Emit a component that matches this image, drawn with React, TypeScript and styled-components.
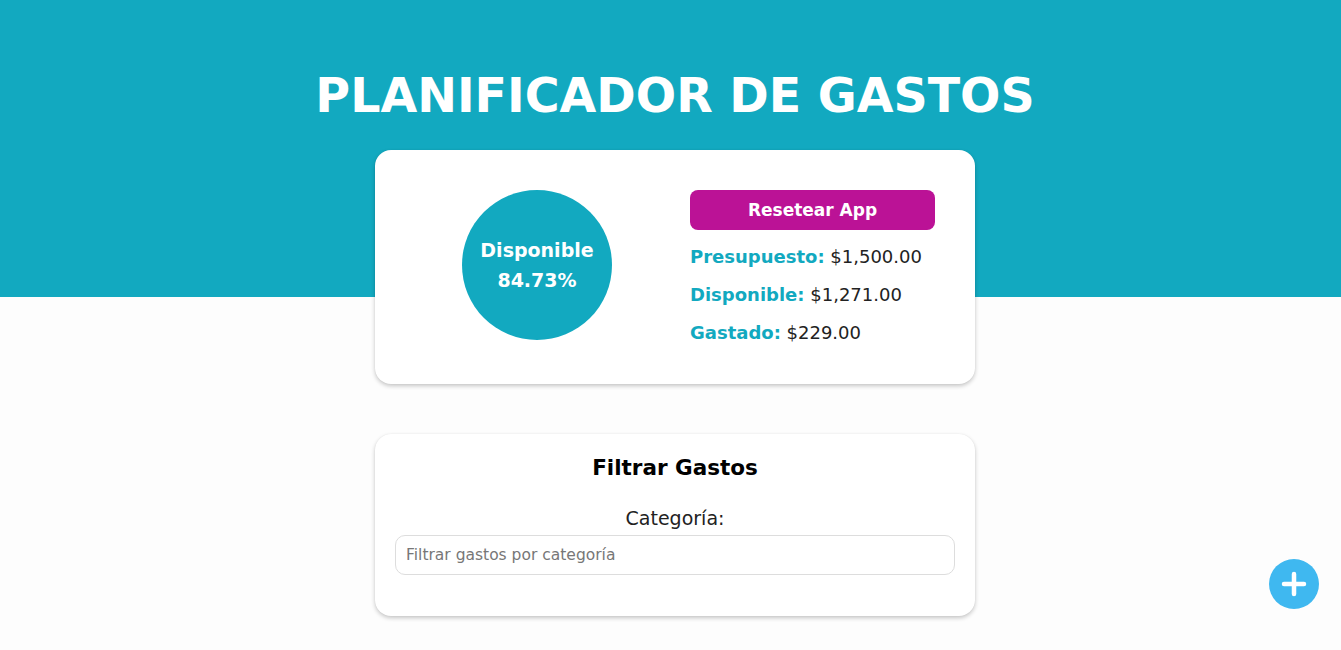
import React from "react";
import styled, { createGlobalStyle } from "styled-components";

const Global = createGlobalStyle`
  * { box-sizing: border-box; }
  html, body { margin: 0; padding: 0; }
  body {
    background: #fdfdfd;
    font-family: "DejaVu Sans", "Noto Sans", sans-serif;
    overflow: hidden;
  }
`;

const Page = styled.div`
  min-height: 650px;
  position: relative;
`;

const Header = styled.header`
  background: #12a9c0;
  height: 297px;
  padding-top: 67px;
  padding-left: 9px;
  display: flex;
  flex-direction: column;
  align-items: center;
`;

const Title = styled.h1`
  margin: 0;
  color: #fff;
  font-family: "DejaVu Sans", sans-serif;
  font-weight: 700;
  font-size: 47.5px;
  line-height: 58px;
`;

const Main = styled.main`
  margin-top: -147px;
  padding-left: 9px;
  display: flex;
  flex-direction: column;
  align-items: center;
  gap: 50px;
`;

const Card = styled.section`
  width: 600px;
  background: #fff;
  border-radius: 16px;
  box-shadow: 0 2px 4px rgba(0, 0, 0, 0.22), 0 0 1px rgba(0, 0, 0, 0.08);
`;

const BudgetCard = styled(Card)`
  height: 234px;
  display: grid;
  grid-template-columns: 1fr 1fr;
  align-items: start;
  padding-top: 40px;
`;

const CircleWrap = styled.div`
  display: flex;
  justify-content: center;
  padding-left: 24px;
`;

const Circle = styled.div`
  width: 150px;
  height: 150px;
  border-radius: 50%;
  background: #12a9c0;
  color: #fff;
  display: flex;
  flex-direction: column;
  align-items: center;
  justify-content: center;
  font-weight: 700;
  font-size: 19px;
  line-height: 30px;
`;

const Stats = styled.div`
  display: flex;
  flex-direction: column;
  padding-left: 15px;
  padding-right: 40px;
`;

const ResetButton = styled.button`
  width: 245px;
  height: 40px;
  border: none;
  border-radius: 8px;
  background: #bb1296;
  color: #fff;
  font-family: inherit;
  font-weight: 700;
  font-size: 17px;
  cursor: pointer;
  margin-bottom: 8px;
`;

const Stat = styled.p`
  margin: 0;
  height: 38px;
  line-height: 38px;
  font-size: 18px;
  color: #222;
  white-space: nowrap;
`;

const StatLabel = styled.span`
  color: #12a9c0;
  font-weight: 700;
`;

const FilterCard = styled(Card)`
  padding: 20px 20px 41px;
  display: flex;
  flex-direction: column;
  align-items: center;
`;

const FilterTitle = styled.h2`
  margin: 0;
  font-size: 21.5px;
  line-height: 28px;
  font-weight: 700;
  color: #000;
`;

const Label = styled.label`
  margin-top: 24px;
  font-size: 19px;
  line-height: 24px;
  color: #222;
`;

const Input = styled.input`
  margin-top: 5px;
  width: 100%;
  height: 40px;
  border: 1px solid #ddd;
  border-radius: 10px;
  padding: 0 10px;
  font-family: inherit;
  font-size: 15.5px;
  &::placeholder { color: #777; }
`;

const Fab = styled.button`
  position: absolute;
  right: 22px;
  top: 559px;
  width: 50px;
  height: 50px;
  border-radius: 50%;
  border: none;
  background: #3fb8f0;
  display: flex;
  align-items: center;
  justify-content: center;
  padding: 0;
`;

export default function App() {
  return (
    <Page>
      <Global />
      <Header>
        <Title>PLANIFICADOR DE GASTOS</Title>
      </Header>
      <Main>
        <BudgetCard>
          <CircleWrap>
            <Circle>
              <span>Disponible</span>
              <span>84.73%</span>
            </Circle>
          </CircleWrap>
          <Stats>
            <ResetButton>Resetear App</ResetButton>
            <Stat><StatLabel>Presupuesto:</StatLabel> $1,500.00</Stat>
            <Stat><StatLabel>Disponible:</StatLabel> $1,271.00</Stat>
            <Stat><StatLabel>Gastado:</StatLabel> $229.00</Stat>
          </Stats>
        </BudgetCard>
        <FilterCard>
          <FilterTitle>Filtrar Gastos</FilterTitle>
          <Label htmlFor="cat">Categoría:</Label>
          <Input id="cat" placeholder="Filtrar gastos por categoría" />
        </FilterCard>
      </Main>
      <Fab aria-label="Nuevo gasto">
        <svg width="26" height="26" viewBox="0 0 26 26">
          <path d="M13 3v20M3 13h20" stroke="#fff" strokeWidth="4.5" strokeLinecap="round" />
        </svg>
      </Fab>
    </Page>
  );
}
